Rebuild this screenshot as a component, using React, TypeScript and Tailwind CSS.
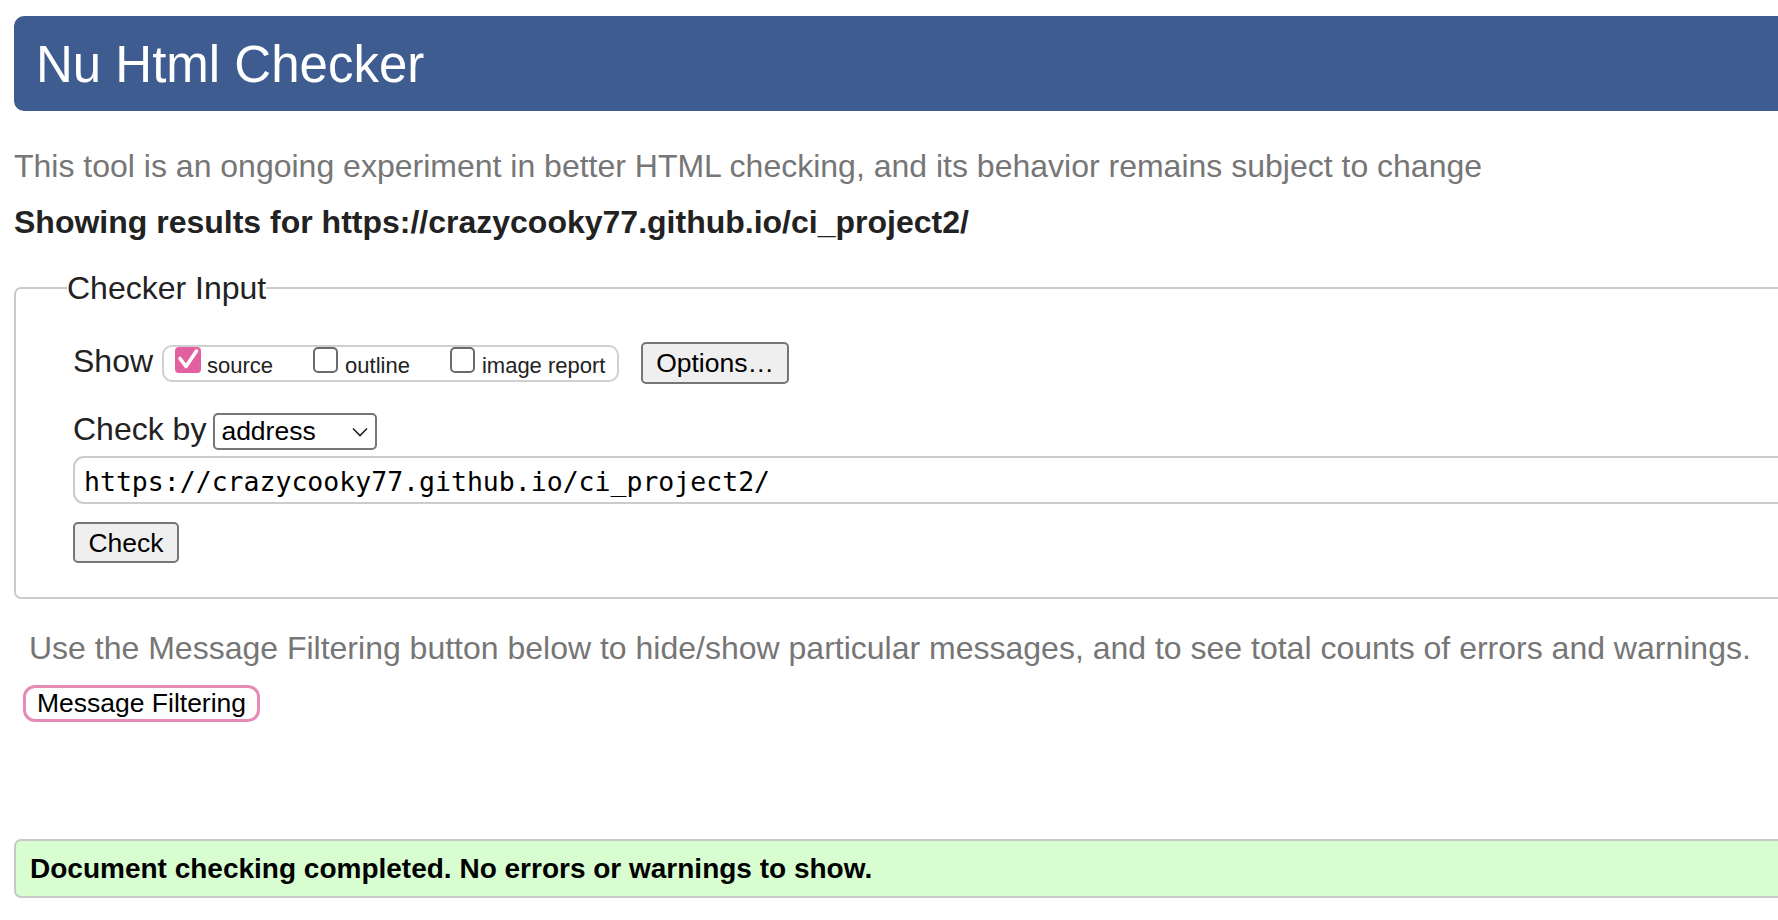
import React from "react";

const sans = "font-['Liberation_Sans',Arial,Helvetica,sans-serif]";

function CheckBox({ checked }: { checked?: boolean }) {
  if (checked) {
    return (
      <span className="inline-block align-baseline w-[26px] h-[26px] rounded-[4px] bg-[#e2609f]">
        <svg viewBox="0 0 26 26" className="block w-[26px] h-[26px]">
          <path
            d="M5 11.5l6 8 10.5-15.5"
            fill="none"
            stroke="white"
            strokeWidth="3.6"
            strokeLinecap="round"
            strokeLinejoin="round"
          />
        </svg>
      </span>
    );
  }
  return (
    <span className="inline-block align-baseline w-[25px] h-[26px] rounded-[5px] border-2 border-[#6b6b6b] bg-white" />
  );
}

export default function App() {
  return (
    <div className={`w-full min-h-screen overflow-hidden bg-white text-[#222] ${sans}`}>
      <div className="w-[1900px]">
        {/* Title bar */}
        <h1 className="mt-[16px] ml-[14px] rounded-[10px] bg-[#3e5c8f] pt-[23px] pb-[21px] pl-[22px] text-[51px] leading-[51px] font-normal text-white">
          Nu Html Checker
        </h1>

        <p className="mt-[39px] ml-[14px] text-[32px] leading-[32px] text-[#767676]">
          This tool is an ongoing experiment in better HTML checking, and its behavior remains subject to change
        </p>

        <p className="mt-[24px] ml-[14px] text-[32px] leading-[32px] font-bold text-[#222]">
          Showing results for https://crazycooky77.github.io/ci_project2/
        </p>

        {/* Checker input */}
        <fieldset className="mt-[33px] ml-[14px] border-2 border-[#cbcbcb] rounded-[7px] pl-[57px] pt-[37px] pb-[34px]">
          <legend className="ml-[-6px] text-[32px] leading-[34px] text-[#222]">Checker Input</legend>

          <div className="flex items-center h-[42px]">
            <span className="mb-[4px] text-[32px] leading-[32px]">Show</span>
            <div className="ml-[9px] w-[457px] h-[37px] border-2 border-[#d0d0d0] rounded-[10px] pl-[11px] text-[22px] leading-[33px] whitespace-nowrap text-[#222]">
              <CheckBox checked />
              <span className="ml-[6px]">source</span>
              <span className="ml-[40px]">
                <CheckBox />
              </span>
              <span className="ml-[7px]">outline</span>
              <span className="ml-[40px]">
                <CheckBox />
              </span>
              <span className="ml-[7px]">image report</span>
            </div>
            <button className="ml-[22px] w-[148px] h-[42px] border-2 border-[#767676] rounded-[5px] bg-[#efefef] text-[26.5px] leading-[32px] text-black">
              Options…
            </button>
          </div>

          <div className="mt-[29px] flex items-baseline">
            <span className="text-[32px] leading-[32px]">Check by</span>
            <div className="ml-[7px] w-[164px] h-[37px] border-2 border-[#767676] rounded-[5px] pl-[6px] pr-[7px] flex items-center justify-between text-[26.5px] leading-[33px] text-black">
              <span>address</span>
              <svg width="16" height="10" viewBox="0 0 16 10">
                <path d="M1 1.5l7 7 7-7" fill="none" stroke="#222" strokeWidth="1.6" />
              </svg>
            </div>
          </div>

          <div className="mt-[6px] h-[48px] border-2 border-[#cccccc] rounded-[11px] pl-[9px] pt-[3px] flex items-center font-['DejaVu_Sans_Mono',monospace] text-[26.5px] leading-[31px] text-black">
            https://crazycooky77.github.io/ci_project2/
          </div>

          <button className="mt-[18px] block w-[106px] h-[41px] border-2 border-[#767676] rounded-[5px] bg-[#efefef] text-[26.5px] leading-[32px] text-black">
            Check
          </button>
        </fieldset>

        <p className="mt-[33px] ml-[29px] text-[32px] leading-[32px] text-[#767676]">
          Use the Message Filtering button below to hide/show particular messages, and to see total counts of errors and warnings.
        </p>

        <button className="mt-[21px] ml-[23px] block w-[237px] h-[37px] border-[3px] border-[#e68bb6] rounded-[12px] bg-white text-[26.5px] leading-[31px] text-black">
          Message Filtering
        </button>

        {/* Result */}
        <div className="mt-[117px] ml-[14px] h-[59px] border-2 border-[#c8c8c8] rounded-[7px] bg-[#d7fdd1] pl-[14px] flex items-center text-[28px] leading-[32px] font-bold text-black">
          Document checking completed. No errors or warnings to show.
        </div>
      </div>
    </div>
  );
}
